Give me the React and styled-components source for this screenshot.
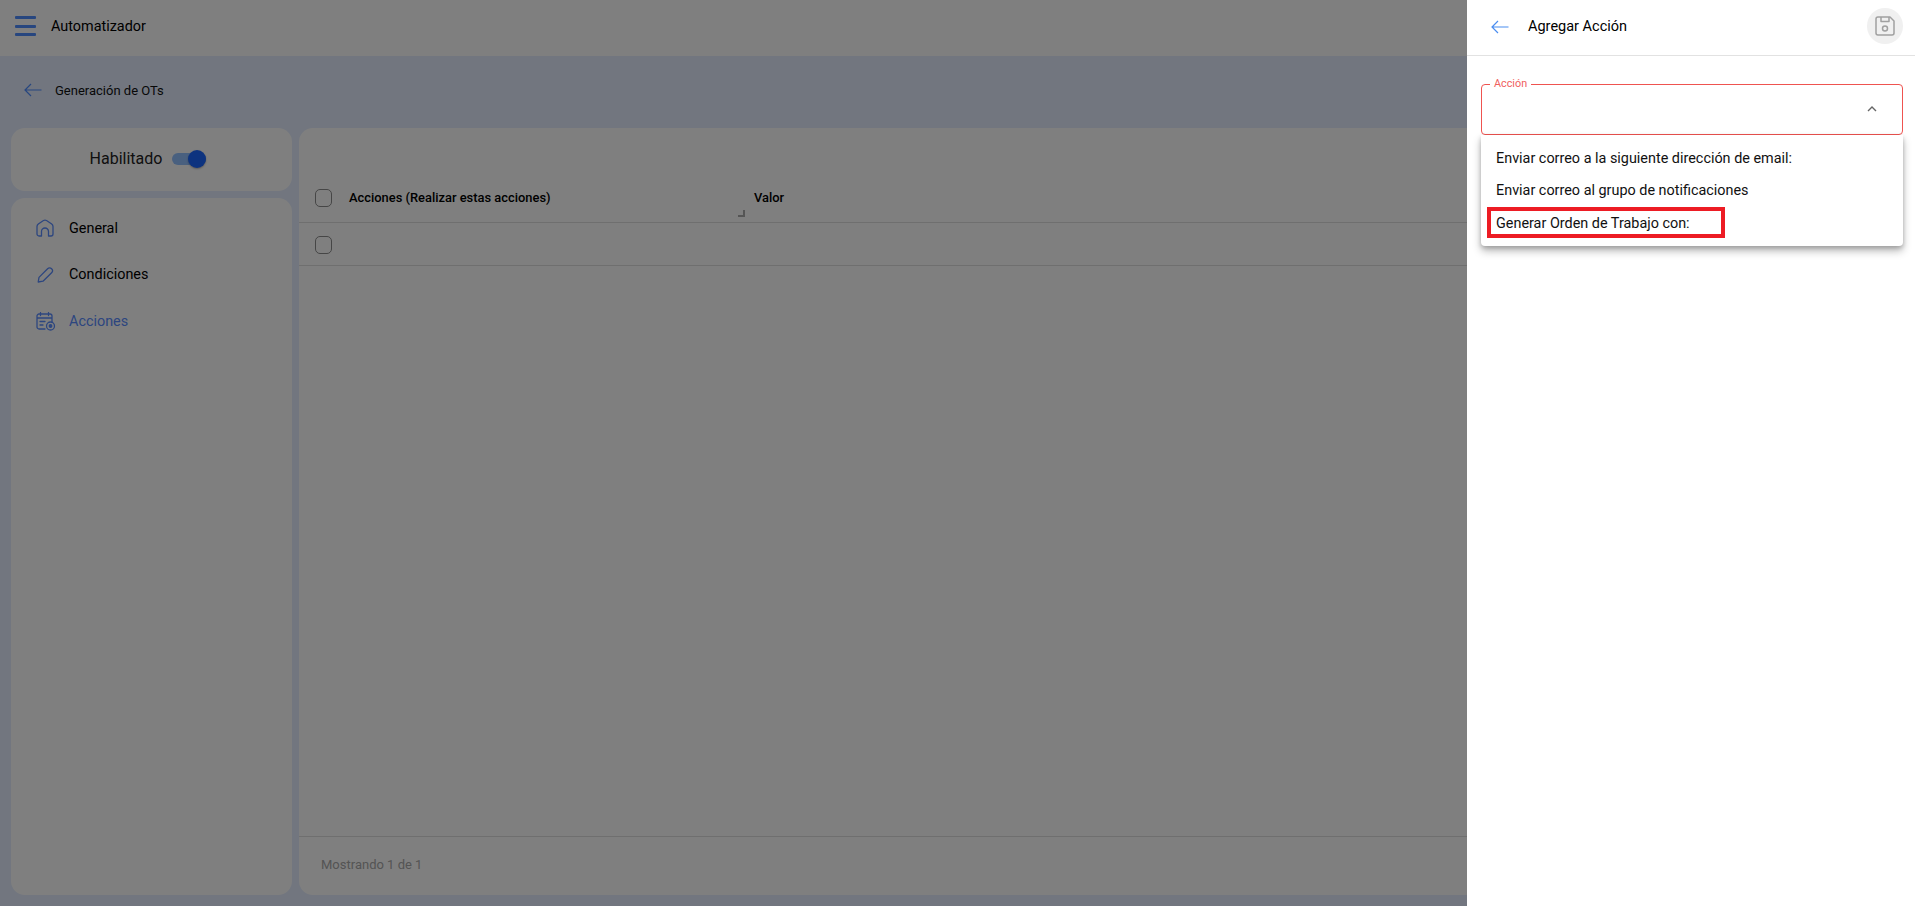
import React from 'react'
import styled, { createGlobalStyle } from 'styled-components'

const GlobalStyle = createGlobalStyle`
  html, body {
    margin: 0;
    padding: 0;
    height: 100%;
    overflow: hidden;
    font-family: Roboto, "Liberation Sans", sans-serif;
  }
  * { box-sizing: border-box; }
`

const Page = styled.div`
  height: 906px;
  display: flex;
  flex-direction: column;
  background: #e4edff;
  color: #000;
`

const TopBar = styled.header`
  flex: 0 0 56px;
  display: flex;
  align-items: center;
  gap: 15px;
  padding: 0 15px 4px;
  background: #fff;
  font-size: 14.4px;
`

const Burger = styled.div`
  width: 21px;
  display: flex;
  flex-direction: column;
  gap: 5.5px;
  span {
    height: 3px;
    background: #4f8cff;
    border-radius: 1px;
  }
`

const SubBar = styled.div`
  flex: 0 0 72px;
  display: flex;
  align-items: center;
  gap: 13px;
  padding: 0 24px 4px;
  font-size: 13px;
  color: #111;
`

const Content = styled.div`
  flex: 1;
  display: flex;
  gap: 7px;
  padding: 0 0 11px 11px;
  min-height: 0;
`

const Sidebar = styled.aside`
  flex: 0 0 281px;
  display: flex;
  flex-direction: column;
  gap: 7px;
`

const Card = styled.section`
  background: #fff;
  border-radius: 14px;
`

const EnabledCard = styled(Card)`
  flex: 0 0 63px;
  display: flex;
  align-items: center;
  justify-content: center;
  gap: 10px;
  padding: 0 7px 2px 0;
  font-size: 16px;
  color: #222;
`

const Switch = styled.div`
  position: relative;
  width: 34px;
  height: 12px;
  border-radius: 6px;
  background: #93c0ff;
  &::after {
    content: '';
    position: absolute;
    right: 0;
    top: -3px;
    width: 18px;
    height: 18px;
    border-radius: 50%;
    background: #1a66ff;
    box-shadow: 0 1px 2px rgba(0, 0, 0, 0.3);
  }
`

const NavCard = styled(Card)`
  flex: 1;
  padding-top: 7px;
`

const NavItem = styled.div`
  height: 46.5px;
  display: grid;
  grid-template-columns: 18px 1fr;
  align-items: center;
  gap: 15px;
  padding-left: 25px;
  font-size: 14.4px;
  color: ${({ $active }) => ($active ? '#5a8cff' : '#000')};
`

const TableCard = styled(Card)`
  flex: 1;
  display: flex;
  flex-direction: column;
  border-radius: 14px 0 0 14px;
`

const HeaderRow = styled.div`
  flex: 0 0 95px;
  display: grid;
  grid-template-columns: 50px 405px 1fr;
  align-items: center;
  padding-top: 46px;
  border-bottom: 1px solid #dedede;
  font-size: 12.9px;
  font-weight: 500;
`

const BodyRow = styled.div`
  flex: 0 0 43px;
  display: flex;
  align-items: center;
  padding-top: 2px;
  border-bottom: 1px solid #dedede;
`

const CheckCell = styled.div`
  padding-left: 16px;
  display: flex;
`

const Checkbox = styled.div`
  width: 16.500px;
  height: 18px;
  border: 1.5px solid #8c8c8c;
  border-radius: 5px;
`

const ResizeCell = styled.div`
  position: relative;
  padding-bottom: 2px;
  &::after {
    content: '';
    position: absolute;
    right: 9px;
    top: 20px;
    width: 5px;
    height: 5px;
    border-right: 2px solid #aaa;
    border-bottom: 2px solid #aaa;
  }
`

const ValueCell = styled.span`
  padding-bottom: 2px;
`

const Spacer = styled.div`
  flex: 1;
`

const Footer = styled.div`
  flex: 0 0 59px;
  display: flex;
  align-items: center;
  padding: 0 22px 4px;
  border-top: 1px solid #dedede;
  font-size: 13px;
  color: #a8a8a8;
`

const Backdrop = styled.div`
  position: fixed;
  inset: 0;
  background: rgba(0, 0, 0, 0.5);
`

const Drawer = styled.aside`
  position: fixed;
  top: 0;
  right: 0;
  bottom: 0;
  width: 448px;
  background: #fff;
  display: flex;
  flex-direction: column;
`

const DrawerHead = styled.div`
  flex: 0 0 56px;
  display: flex;
  align-items: center;
  gap: 19px;
  padding: 0 12px 2px 24px;
  border-bottom: 1px solid #e2e2e2;
  font-size: 14.5px;
`

const DrawerTitle = styled.span`
  flex: 1;
`

const SaveButton = styled.div`
  width: 36px;
  height: 36px;
  margin-bottom: 2px;
  border-radius: 50%;
  background: #f0f0f0;
  display: flex;
  align-items: center;
  justify-content: center;
`

const DrawerBody = styled.div`
  padding: 21.5px 12px 0 14px;
`

const Field = styled.fieldset`
  margin: 0;
  height: 57.5px;
  padding: 0 25px 6px 8px;
  border: 1px solid #ef5350;
  border-radius: 4px;
  display: flex;
  align-items: center;
  justify-content: flex-end;
  legend {
    padding: 0 4px 2px;
    font-size: 10.8px;
    line-height: 11px;
    color: #f0605d;
  }
`

const Menu = styled.ul`
  margin: 0;
  padding: 7px 0 6.5px;
  list-style: none;
  background: #fff;
  border-radius: 0 0 4px 4px;
  box-shadow: 0 5px 8px rgba(0, 0, 0, 0.28), 0 2px 4px rgba(0, 0, 0, 0.18);
`

const MenuItem = styled.li`
  height: 32.5px;
  padding-left: 15px;
  display: flex;
  align-items: center;
  font-size: 14.4px;
  color: #111;
`

const Callout = styled.span`
  position: absolute;
  left: 1487px;
  top: 207px;
  width: 238px;
  height: 31px;
  border: 4.5px solid #ed1c24;
`

const BackArrow = ({ color }) => (
  <svg width="18" height="14" viewBox="0 0 18 14" fill="none" stroke={color} strokeWidth="1.2">
    <path d="M17.5 7H1M7 1 1 7l6 6" />
  </svg>
)

const HomeIcon = () => (
  <svg width="18" height="18" viewBox="0 0 18 18" fill="none" stroke="#5a8cff" strokeWidth="1.3" strokeLinejoin="round">
    <path d="M1 7.5Q1 6 2.300 5L7.500 1.500Q9 .6 10.500 1.500L15.700 5Q17 6 17 7.500V15a2 2 0 0 1-2 2h-2.500v-4.500a3.500 3.500 0 0 0-7 0V17H3a2 2 0 0 1-2-2Z" />
  </svg>
)

const PencilIcon = () => (
  <svg width="18" height="18" viewBox="0 0 18 18" fill="none" stroke="#5a8cff" strokeWidth="1.3" strokeLinejoin="round">
    <path d="M2.200 16 3 11.400 11.600 2.800a2.800 2.800 0 0 1 4 4L7 15.200Z" />
  </svg>
)

const ActionsIcon = () => (
  <svg width="20" height="19" viewBox="0 0 20 19" fill="none" stroke="#5a8cff" strokeWidth="1.3" strokeLinecap="round">
    <path d="M9 17H3a2 2 0 0 1-2-2V4a2 2 0 0 1 2-2h11a2 2 0 0 1 2 2v6M1 6h15M4.500 .6v3M12.500 .6v3M4 9.500h5M4 13h3" />
    <circle cx="14.500" cy="14" r="4" />
    <circle cx="14.500" cy="14" r="1.300" fill="#5a8cff" />
  </svg>
)

const SaveIcon = () => (
  <svg width="20" height="20" viewBox="0 0 20 20" fill="none" stroke="#a0a0a0" strokeWidth="1.5" strokeLinejoin="round">
    <path d="M3 1h12l4 4v12a2 2 0 0 1-2 2H3a2 2 0 0 1-2-2V3a2 2 0 0 1 2-2Z" />
    <path d="M6 1v4.500h8V1" />
    <circle cx="10" cy="12.500" r="2.500" />
  </svg>
)

const Chevron = () => (
  <svg width="10" height="6" viewBox="0 0 10 6" fill="none" stroke="#666" strokeWidth="1.4">
    <path d="M1 5l4-4 4 4" />
  </svg>
)

const navItems = [
  { label: 'General', icon: <HomeIcon /> },
  { label: 'Condiciones', icon: <PencilIcon /> },
  { label: 'Acciones', icon: <ActionsIcon />, active: true }
]

const options = [
  'Enviar correo a la siguiente dirección de email:',
  'Enviar correo al grupo de notificaciones',
  'Generar Orden de Trabajo con:'
]

export default function App() {
  return (
    <Page>
      <GlobalStyle />
      <TopBar>
        <Burger><span /><span /><span /></Burger>
        <span>Automatizador</span>
      </TopBar>
      <SubBar>
        <BackArrow color="#4f8cff" />
        <span>Generación de OTs</span>
      </SubBar>
      <Content>
        <Sidebar>
          <EnabledCard>
            Habilitado
            <Switch />
          </EnabledCard>
          <NavCard>
            {navItems.map(item => (
              <NavItem key={item.label} $active={item.active}>
                {item.icon}
                {item.label}
              </NavItem>
            ))}
          </NavCard>
        </Sidebar>
        <TableCard>
          <HeaderRow>
            <CheckCell><Checkbox /></CheckCell>
            <ResizeCell>Acciones (Realizar estas acciones)</ResizeCell>
            <ValueCell>Valor</ValueCell>
          </HeaderRow>
          <BodyRow>
            <CheckCell><Checkbox /></CheckCell>
          </BodyRow>
          <Spacer />
          <Footer>Mostrando 1 de 1</Footer>
        </TableCard>
      </Content>
      <Backdrop />
      <Drawer>
        <DrawerHead>
          <BackArrow color="#4a8df0" />
          <DrawerTitle>Agregar Acción</DrawerTitle>
          <SaveButton><SaveIcon /></SaveButton>
        </DrawerHead>
        <DrawerBody>
          <Field>
            <legend>Acción</legend>
            <Chevron />
          </Field>
          <Menu>
            {options.map(o => <MenuItem key={o}>{o}</MenuItem>)}
          </Menu>
        </DrawerBody>
      </Drawer>
      <Callout />
    </Page>
  )
}
